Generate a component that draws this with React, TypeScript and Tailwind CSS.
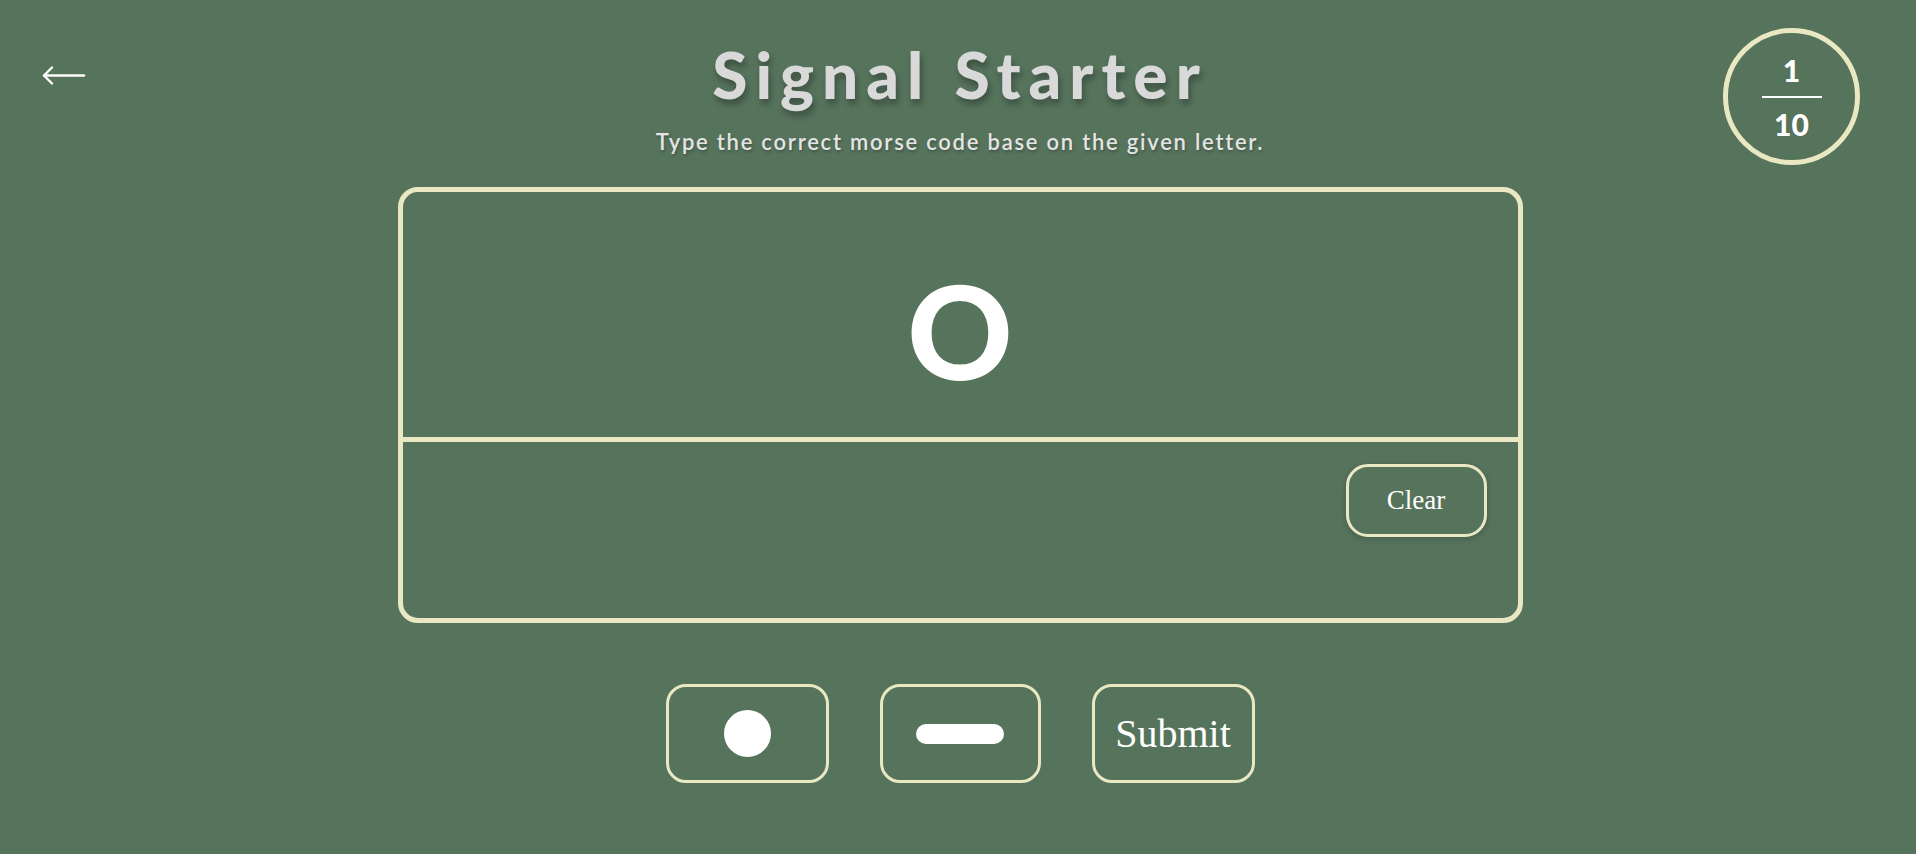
import { useState } from "react";

const font = "font-['Lato','Noto_Sans',sans-serif]";

function BackArrow() {
  return (
    <svg width="44" height="20" viewBox="0 0 44 20" fill="none" stroke="#ffffff" strokeWidth="2.4" strokeLinecap="round" strokeLinejoin="round">
      <path d="M2 9.5 H42" />
      <path d="M10 1.5 L2 9.5 L10 17.5" />
    </svg>
  );
}

function Counter({ current, total }: { current: number; total: number }) {
  return (
    <div className="w-[137px] h-[137px] rounded-full border-[5px] border-[#e9e8c3] flex flex-col items-center justify-center">
      <span className={`${font} text-[30px] font-black leading-none text-white`}>{current}</span>
      <span className="w-[60px] h-[2px] bg-white my-[11px]" />
      <span className={`${font} text-[30px] font-black leading-none text-white`}>{total}</span>
    </div>
  );
}

export default function App() {
  const [code, setCode] = useState("");

  return (
    <div className="h-[854px] bg-[#56735c] flex flex-col">
      {/* Header */}
      <div className="grid grid-cols-[1fr_auto_1fr] px-[42px]">
        <div className="pt-[66px]">
          <button className="cursor-pointer">
            <BackArrow />
          </button>
        </div>
        <div className="flex flex-col items-center pt-[43px] pl-[4px]">
          <h1
            className={`${font} text-[64px] font-black leading-none tracking-[0.125em] text-[#d9d9d9] [text-shadow:2px_5px_6px_rgba(0,0,0,0.3)]`}
          >
            Signal Starter
          </h1>
          <p
            className={`${font} mt-[24px] text-[22px] font-semibold leading-none tracking-[0.08em] text-[#e4e4e4] [text-shadow:1px_2px_3px_rgba(0,0,0,0.25)]`}
          >
            Type the correct morse code base on the given letter.
          </p>
        </div>
        <div className="flex justify-end pt-[28px] pr-[14px]">
          <Counter current={1} total={10} />
        </div>
      </div>

      {/* Main column */}
      <div className="flex flex-col items-center pl-[4px] mt-[22px]">
        <div className="w-[1125px] h-[436px] border-[5px] border-[#e9e8c3] rounded-[20px] flex flex-col">
          <div className="h-[250px] border-b-[5px] border-[#e9e8c3] flex items-center justify-center pt-[30px]">
            <span className={`${font} text-[130px] font-black leading-none text-white`}>O</span>
          </div>
          <div className="flex-1 flex justify-end items-start pt-[22px] pr-[31px]">
            <button
              onClick={() => setCode("")}
              className="w-[141px] h-[73px] border-[3px] border-[#e9e8c3] rounded-[22px] shadow-[0_2px_6px_rgba(0,0,0,0.2)] font-['Liberation_Serif',serif] text-[27px] text-white cursor-pointer"
            >
              Clear
            </button>
            <span className="hidden">{code}</span>
          </div>
        </div>

        {/* Controls */}
        <div className="flex gap-[51px] mt-[61px]">
          <button
            onClick={() => setCode(code + ".")}
            className="w-[163px] h-[99px] border-[3px] border-[#e9e8c3] rounded-[20px] flex items-center justify-center cursor-pointer"
          >
            <span className="w-[47px] h-[47px] rounded-full bg-white" />
          </button>
          <button
            onClick={() => setCode(code + "-")}
            className="w-[161px] h-[99px] border-[3px] border-[#e9e8c3] rounded-[20px] flex items-center justify-center cursor-pointer"
          >
            <span className="w-[88px] h-[20px] rounded-full bg-white" />
          </button>
          <button className="w-[163px] h-[99px] border-[3px] border-[#e9e8c3] rounded-[20px] flex items-center justify-center font-['Liberation_Serif',serif] text-[40px] text-white cursor-pointer">
            Submit
          </button>
        </div>
      </div>
    </div>
  );
}
